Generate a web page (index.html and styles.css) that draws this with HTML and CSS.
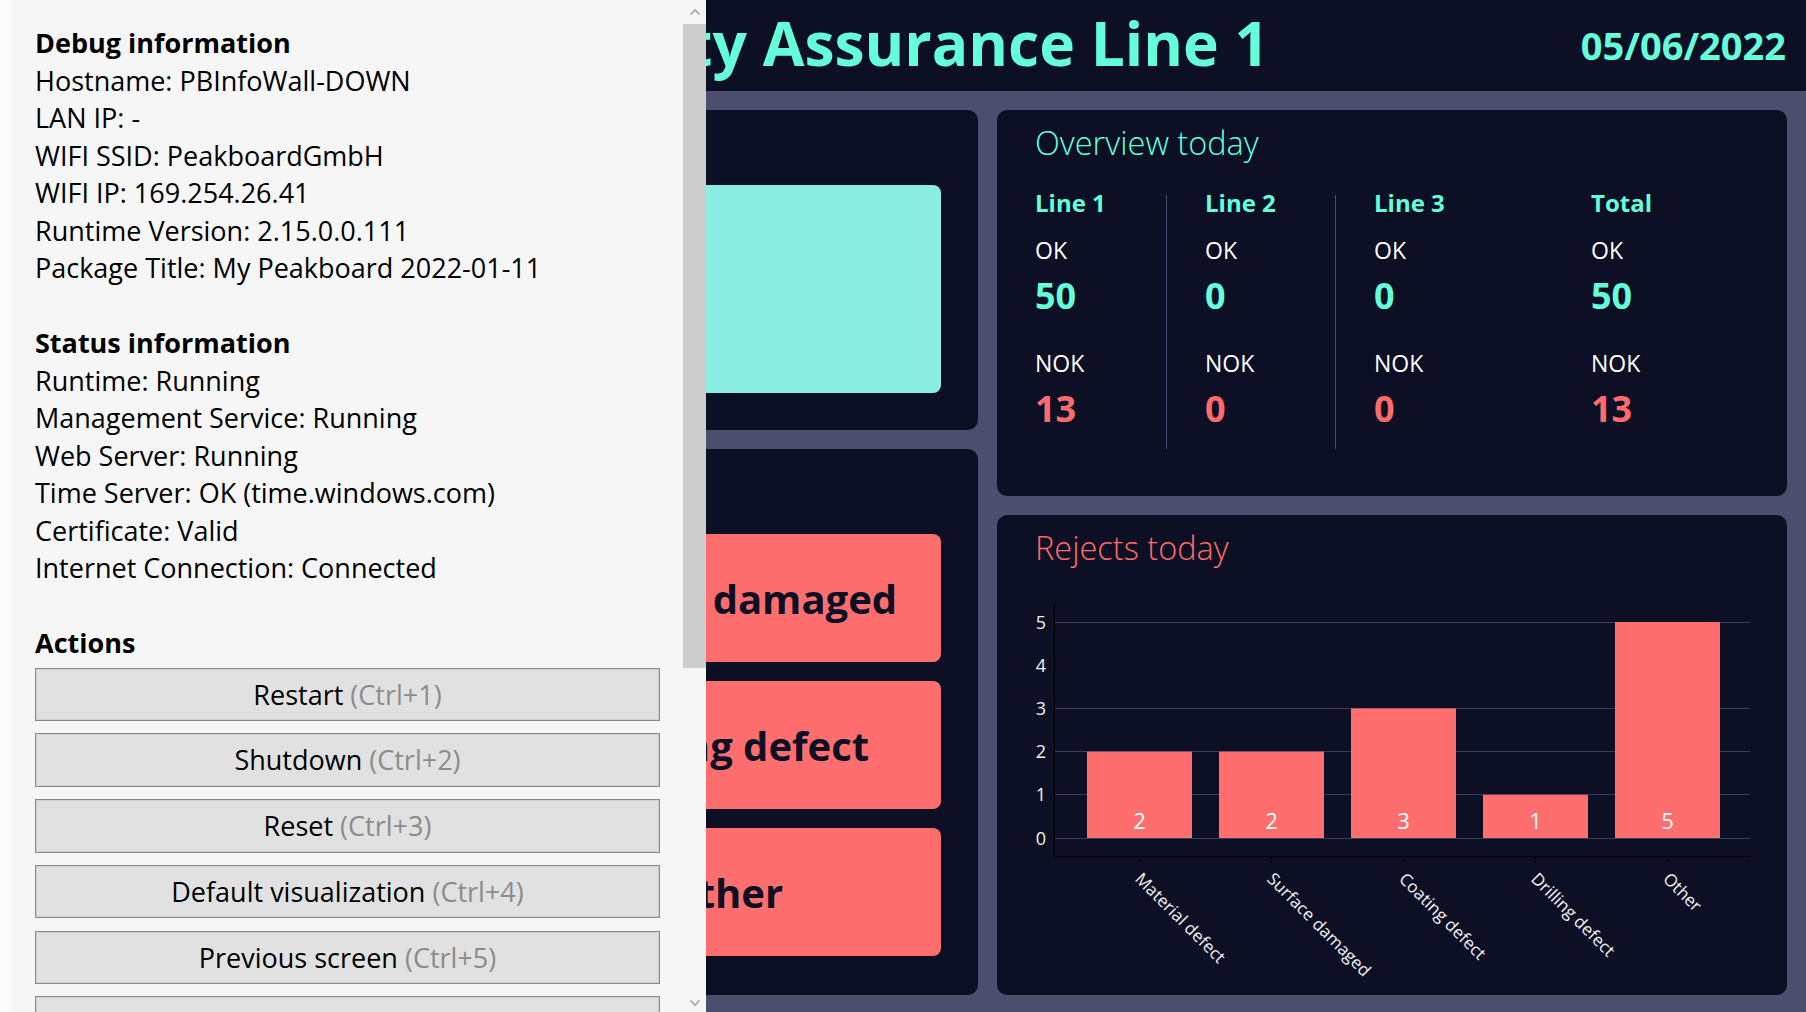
FILE: index.html
```html
<!DOCTYPE html>
<html lang="en">
<head>
<meta charset="utf-8">
<title>Quality Assurance Line 1</title>
<link rel="stylesheet" href="styles.css">
</head>
<body>
<div class="dashboard">
  <header class="topbar">
    <span class="spacer"></span>
    <h1 class="title">Quality Assurance Line 1</h1>
    <div class="date">05/06/2022</div>
  </header>
  <main class="board">
    <div class="col col-left">
      <section class="card card-status">
        <div class="ok-box"></div>
      </section>
      <section class="card card-reasons">
        <div class="reason-grid">
          <div class="reason"></div>
          <div class="reason">Surface damaged</div>
          <div class="reason"></div>
          <div class="reason">Coating defect</div>
          <div class="reason"></div>
          <div class="reason">Other</div>
        </div>
      </section>
    </div>
    <div class="col col-right">
      <section class="card card-overview">
        <h2 class="card-title cyan">Overview today</h2>
        <div class="stats">
          <div class="stat-col c1">
            <div class="stat-head">Line 1</div>
            <div class="stat-label">OK</div>
            <div class="stat-val ok">50</div>
            <div class="stat-label nok-label">NOK</div>
            <div class="stat-val nok">13</div>
          </div>
          <div class="stat-col c2">
            <div class="stat-head">Line 2</div>
            <div class="stat-label">OK</div>
            <div class="stat-val ok">0</div>
            <div class="stat-label nok-label">NOK</div>
            <div class="stat-val nok">0</div>
          </div>
          <div class="stat-col c3">
            <div class="stat-head">Line 3</div>
            <div class="stat-label">OK</div>
            <div class="stat-val ok">0</div>
            <div class="stat-label nok-label">NOK</div>
            <div class="stat-val nok">0</div>
          </div>
          <div class="stat-col c4">
            <div class="stat-head">Total</div>
            <div class="stat-label">OK</div>
            <div class="stat-val ok">50</div>
            <div class="stat-label nok-label">NOK</div>
            <div class="stat-val nok">13</div>
          </div>
        </div>
      </section>
      <section class="card card-rejects">
        <h2 class="card-title red">Rejects today</h2>
        <svg class="chart" width="790" height="427" viewBox="0 0 790 427">
          <g class="gridlines">
            <line x1="57" x2="753" y1="54.5" y2="54.5"/>
            <line x1="57" x2="753" y1="140.5" y2="140.5"/>
            <line x1="57" x2="753" y1="183.5" y2="183.5"/>
            <line x1="57" x2="753" y1="226.5" y2="226.5"/>
            <line x1="57" x2="753" y1="270.5" y2="270.5"/>
          </g>
          <g class="bars">
            <rect x="90" y="183.6" width="105" height="86.4"/>
            <rect x="222" y="183.6" width="105" height="86.4"/>
            <rect x="354" y="140.4" width="105" height="129.6"/>
            <rect x="486" y="226.8" width="105" height="43.2"/>
            <rect x="618" y="54" width="105" height="216"/>
          </g>
          <g class="axes">
            <line x1="57.5" x2="57.5" y1="36" y2="289"/>
            <line x1="57" x2="753" y1="288.5" y2="288.5"/>
            <line x1="142.5" x2="142.5" y1="288" y2="295"/>
            <line x1="274.5" x2="274.5" y1="288" y2="295"/>
            <line x1="406.5" x2="406.5" y1="288" y2="295"/>
            <line x1="538.5" x2="538.5" y1="288" y2="295"/>
            <line x1="670.5" x2="670.5" y1="288" y2="295"/>
          </g>
          <g class="ylabels">
            <text x="49" y="60.5">5</text>
            <text x="49" y="103.7">4</text>
            <text x="49" y="146.9">3</text>
            <text x="49" y="190.1">2</text>
            <text x="49" y="233.3">1</text>
            <text x="49" y="276.5">0</text>
          </g>
          <g class="vlabels">
            <text x="142.5" y="261">2</text>
            <text x="274.5" y="261">2</text>
            <text x="406.5" y="261">3</text>
            <text x="538.5" y="261">1</text>
            <text x="670.5" y="261">5</text>
          </g>
          <g class="xlabels">
            <text x="137" y="312" transform="rotate(45 137 312)">Material defect</text>
            <text x="269" y="312" transform="rotate(45 269 312)">Surface damaged</text>
            <text x="401" y="312" transform="rotate(45 401 312)">Coating defect</text>
            <text x="533" y="312" transform="rotate(45 533 312)">Drilling defect</text>
            <text x="665" y="312" transform="rotate(45 665 312)">Other</text>
          </g>
        </svg>
      </section>
    </div>
  </main>
</div>

<aside class="debug">
  <div class="debug-body">
    <div class="section">
      <h3 class="section-title">Debug information</h3>
      <p>Hostname: PBInfoWall-DOWN</p>
      <p>LAN IP: -</p>
      <p>WIFI SSID: PeakboardGmbH</p>
      <p>WIFI IP: 169.254.26.41</p>
      <p>Runtime Version: 2.15.0.0.111</p>
      <p>Package Title: My Peakboard 2022-01-11</p>
    </div>
    <div class="section">
      <h3 class="section-title">Status information</h3>
      <p>Runtime: Running</p>
      <p>Management Service: Running</p>
      <p>Web Server: Running</p>
      <p>Time Server: OK (time.windows.com)</p>
      <p>Certificate: Valid</p>
      <p>Internet Connection: Connected</p>
    </div>
    <div class="section">
      <h3 class="section-title">Actions</h3>
      <div class="actions-list">
        <div class="action-btn">Restart <span class="shortcut">(Ctrl+1)</span></div>
        <div class="action-btn">Shutdown <span class="shortcut">(Ctrl+2)</span></div>
        <div class="action-btn">Reset <span class="shortcut">(Ctrl+3)</span></div>
        <div class="action-btn">Default visualization <span class="shortcut">(Ctrl+4)</span></div>
        <div class="action-btn">Previous screen <span class="shortcut">(Ctrl+5)</span></div>
        <div class="action-btn"></div>
      </div>
    </div>
  </div>
  <div class="scrollbar">
    <div class="sb-arrow up">
      <svg width="12" height="8" viewBox="0 0 12 8"><polyline points="1.5,6.5 6,2 10.5,6.5"/></svg>
    </div>
    <div class="sb-thumb"></div>
    <div class="sb-track"></div>
    <div class="sb-arrow down">
      <svg width="12" height="8" viewBox="0 0 12 8"><polyline points="1.5,1.5 6,6 10.5,1.5"/></svg>
    </div>
  </div>
</aside>
</body>
</html>
```

FILE: styles.css
```css
* {
  box-sizing: border-box;
  margin: 0;
  padding: 0;
}

html, body {
  width: 1806px;
  height: 1012px;
  overflow: hidden;
}

body {
  position: relative;
  font-family: "Open Sans", "Noto Sans", "DejaVu Sans", sans-serif;
  background: #4b4f6d;
}

/* ---------- dashboard ---------- */
.dashboard {
  width: 1806px;
  height: 1012px;
  display: flex;
  flex-direction: column;
  background: #4b4f6d;
}

.topbar {
  height: 91px;
  flex: none;
  background: #0d1025;
  display: grid;
  grid-template-columns: 1fr auto 1fr;
  align-items: start;
  padding: 0 20px;
}

.title {
  font-size: 60.5px;
  font-weight: 700;
  line-height: 80px;
  margin-top: 3px;
  padding-right: 12px;
  color: #64ffda;
  white-space: nowrap;
}

.date {
  justify-self: end;
  font-size: 38px;
  font-weight: 700;
  line-height: 80px;
  margin-top: 5px;
  color: #64ffda;
}

.board {
  flex: 1;
  display: flex;
  gap: 19px;
  padding: 19px 19px 17px 19px;
}

.col {
  display: flex;
  flex-direction: column;
  gap: 19px;
}

.col-left { width: 959px; }
.col-right { width: 790px; }

.card {
  background: #0d1025;
  border-radius: 10px;
}

.card-title {
  font-size: 32.5px;
  font-weight: 300;
  line-height: 40px;
  white-space: nowrap;
}

.cyan { color: #64ffda; }
.red { color: #ff6b6b; }

.card-status {
  height: 320px;
  padding: 75px 37px 37px;
  display: flex;
  flex-direction: column;
}

.ok-box {
  flex: 1;
  background: #8aefe0;
  border-radius: 8px;
}

.card-reasons {
  height: 546px;
  padding: 85px 37px 39px;
  display: flex;
  flex-direction: column;
}

.reason-grid {
  flex: 1;
  display: grid;
  grid-template-columns: 1fr 1fr;
  grid-template-rows: repeat(3, 1fr);
  gap: 19px;
}

.reason {
  background: #ff6e6e;
  border-radius: 8px;
  display: flex;
  align-items: center;
  justify-content: center;
  font-size: 40px;
  font-weight: 700;
  color: #0d1025;
  white-space: nowrap;
}

/* overview */
.card-overview {
  height: 386px;
  padding: 13px 38px 12px;
}

.stats {
  margin-top: 32px;
  display: flex;
}

.stat-col {
  height: 254px;
  display: flex;
  flex-direction: column;
  color: #ffffff;
}

.c1 { width: 131px; }
.c2 { width: 169px; border-left: 1px solid #4b4f6d; padding-left: 38px; }
.c3 { width: 256px; border-left: 1px solid #4b4f6d; padding-left: 38px; }
.c4 { flex: 1; }

.stat-head {
  font-size: 24px;
  font-weight: 700;
  line-height: 18px;
  margin-top: -1px;
  color: #64ffda;
}

.stat-label {
  margin-top: 23px;
  font-size: 23px;
  line-height: 30px;
}

.stat-label.nok-label { margin-top: 30px; }

.stat-val {
  margin-top: 9px;
  font-size: 36px;
  font-weight: 700;
  line-height: 44px;
}

.stat-val.ok { color: #64ffda; }
.stat-val.nok { color: #ff6b6b; }

/* rejects chart */
.card-rejects {
  height: 480px;
  padding-top: 13px;
}

.card-rejects .card-title { padding-left: 38px; }

.chart {
  display: block;
  font-family: "Open Sans", "Noto Sans", sans-serif;
}

.gridlines line {
  stroke: #3a3e5a;
  stroke-width: 1;
}

.bars rect { fill: #ff6e6e; }

.axes line {
  stroke: #000000;
  stroke-width: 1;
}

.ylabels text {
  fill: #f2f2f2;
  font-size: 18px;
  text-anchor: end;
}

.vlabels text {
  fill: #ffffff;
  font-size: 22px;
  text-anchor: middle;
}

.xlabels text {
  fill: #f2f2f2;
  font-size: 17px;
}

/* ---------- debug overlay ---------- */
.debug {
  position: absolute;
  left: 0;
  top: 0;
  width: 706px;
  height: 1012px;
  display: flex;
  background: #f6f6f6;
  box-shadow: inset 12px 0 0 #fcfcfc;
  color: #000000;
}

.debug-body {
  flex: 1;
  overflow: hidden;
  padding: 24px 23px 0 35px;
  font-size: 27px;
  line-height: 37.5px;
}

.section + .section { margin-top: 37.5px; }

.section-title {
  font-size: 27px;
  font-weight: 700;
  line-height: 37.5px;
}

.actions-list {
  margin-top: 6px;
  display: flex;
  flex-direction: column;
  gap: 12.3px;
}

.action-btn {
  height: 53.5px;
  flex: none;
  background: #e1e1e1;
  border: 1px solid #8a8a8a;
  box-shadow: inset 0 0 0 1px #d0d0d0;
  display: flex;
  align-items: center;
  justify-content: center;
  white-space: pre;
  color: #000000;
}

.shortcut { color: #8c8c8c; }

.scrollbar {
  width: 23px;
  flex: none;
  display: flex;
  flex-direction: column;
}

.sb-arrow {
  display: flex;
  align-items: center;
  justify-content: center;
}

.sb-arrow.up { height: 24px; }
.sb-arrow.down { height: 18px; }

.sb-arrow polyline {
  fill: none;
  stroke: #a3a3a3;
  stroke-width: 1.6;
}

.sb-thumb {
  height: 644px;
  background: #cdcdcd;
}

.sb-track { flex: 1; }
```
